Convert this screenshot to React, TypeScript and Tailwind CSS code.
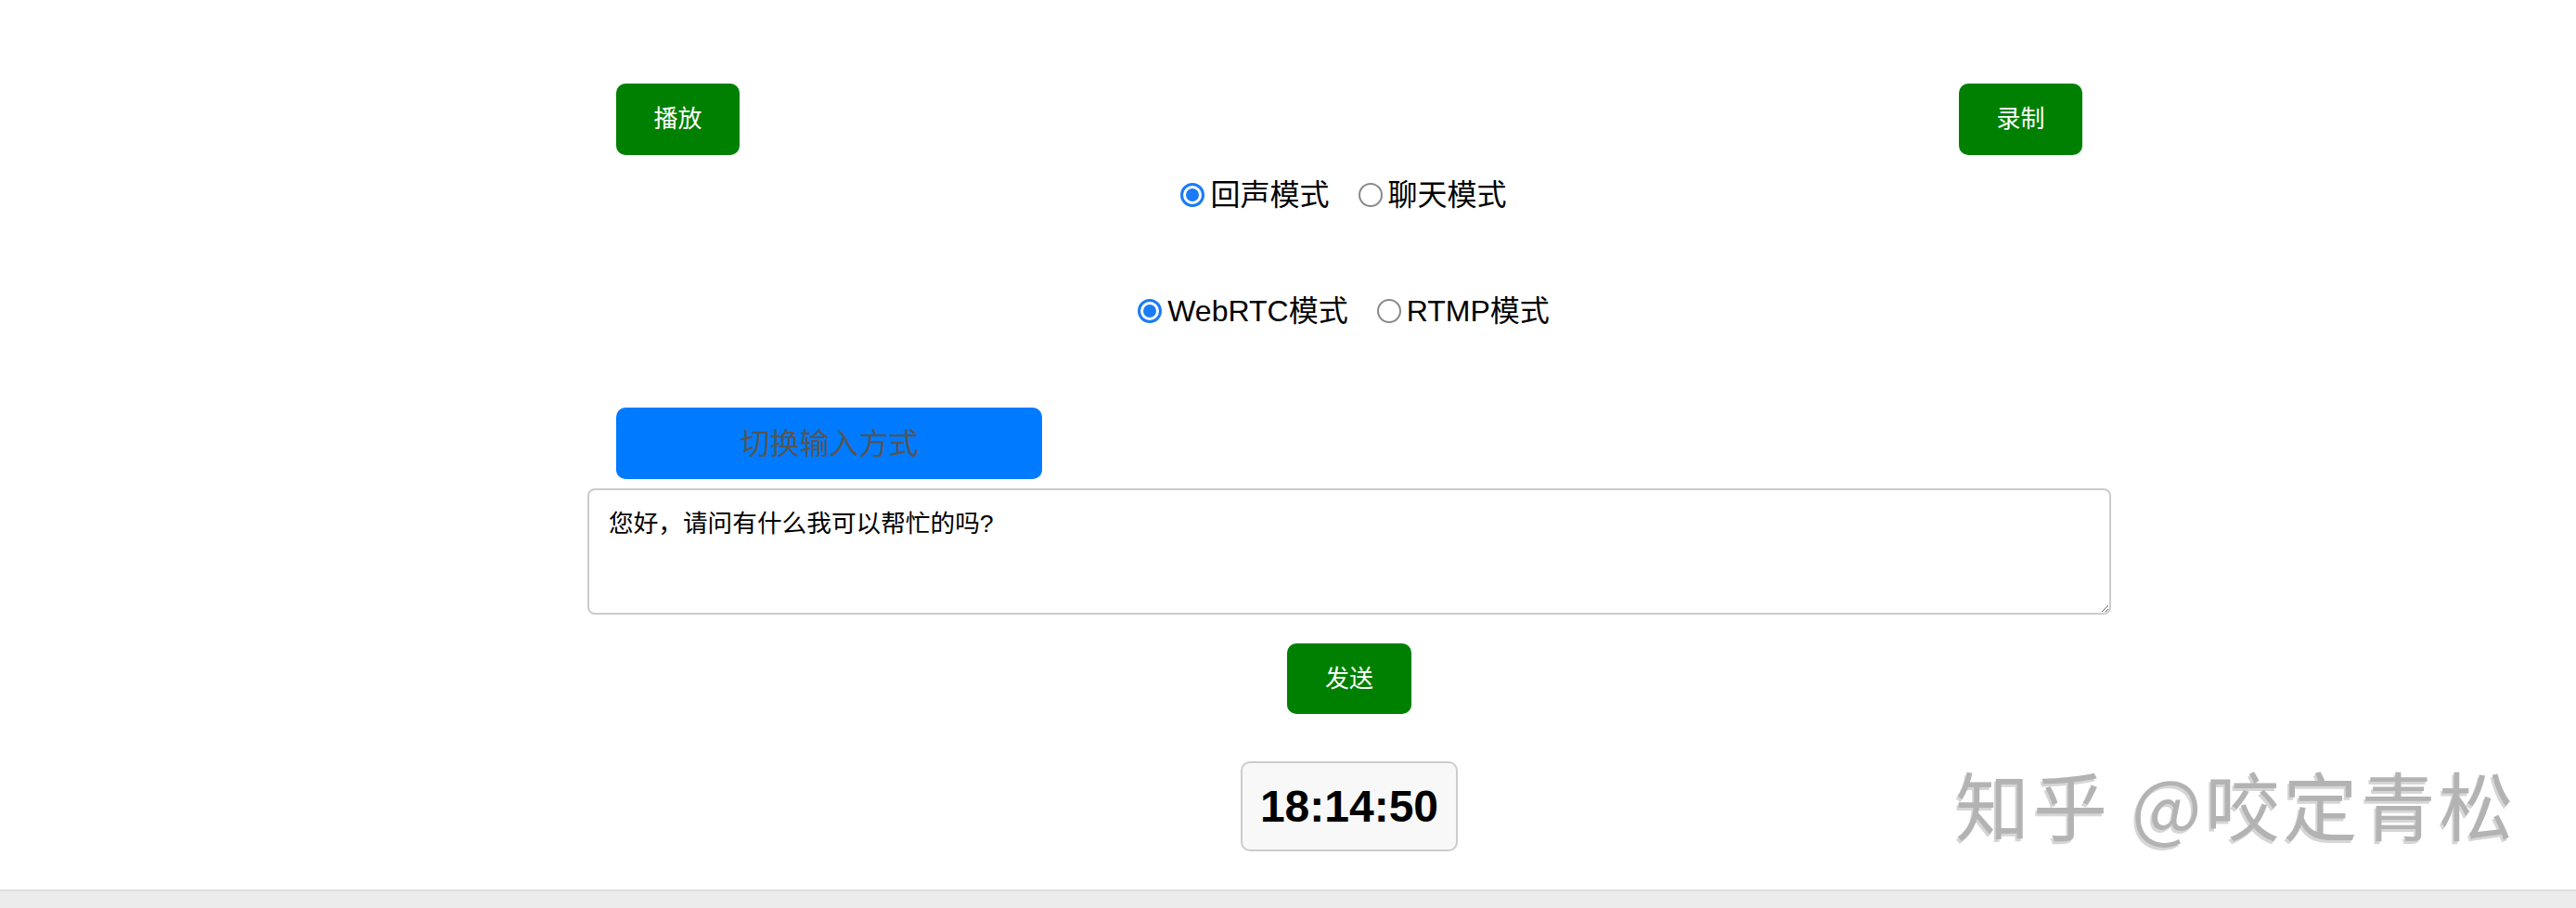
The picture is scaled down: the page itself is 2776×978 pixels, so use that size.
import { useState } from "react";

function Radio({ checked }: { checked: boolean }) {
  return checked ? (
    <span className="flex h-[26px] w-[26px] shrink-0 items-center justify-center rounded-full border-[3px] border-[#1a7cf5] bg-white">
      <span className="h-[14px] w-[14px] rounded-full bg-[#1a7cf5]" />
    </span>
  ) : (
    <span className="h-[26px] w-[26px] shrink-0 rounded-full border-2 border-[#8a8a8a] bg-white" />
  );
}

function RadioGroup({
  options,
  value,
  onChange,
}: {
  options: string[];
  value: string;
  onChange: (v: string) => void;
}) {
  return (
    <div className="flex h-[40px] items-center justify-center pr-[12px] text-[32px] text-black">
      {options.map((opt, i) => (
        <label
          key={opt}
          onClick={() => onChange(opt)}
          className={`flex cursor-pointer items-center ${i > 0 ? "ml-[31px]" : ""}`}
        >
          <Radio checked={value === opt} />
          <span className="ml-[6px] leading-none">{opt}</span>
        </label>
      ))}
    </div>
  );
}

export default function App() {
  const [mode, setMode] = useState("回声模式");
  const [transport, setTransport] = useState("WebRTC模式");
  const [text, setText] = useState("您好，请问有什么我可以帮忙的吗?");

  return (
    <div className="relative flex min-h-[978px] flex-col bg-white font-['Liberation_Sans','Noto_Sans_CJK_SC',sans-serif]">
      <div className="flex-1">
        <div className="ml-[633px] flex w-[1642px] flex-col">
          {/* top buttons */}
          <div className="flex justify-between px-[31px] pt-[90px]">
            <button className="h-[77px] w-[133px] rounded-[10px] bg-[#008000] text-[26px] text-white">
              播放
            </button>
            <button className="h-[77px] w-[133px] rounded-[10px] bg-[#008000] text-[26px] text-white">
              录制
            </button>
          </div>

          <div className="mt-[23px]">
            <RadioGroup
              options={["回声模式", "聊天模式"]}
              value={mode}
              onChange={setMode}
            />
          </div>

          <div className="mt-[85px]">
            <RadioGroup
              options={["WebRTC模式", "RTMP模式"]}
              value={transport}
              onChange={setTransport}
            />
          </div>

          <button className="ml-[31px] mt-[84px] h-[77px] w-[459px] rounded-[10px] bg-[#007bff] text-[32px] text-[#555555]">
            切换输入方式
          </button>

          <textarea
            value={text}
            onChange={(e) => setText(e.target.value)}
            className="mt-[10px] h-[136px] w-full rounded-[8px] border-2 border-[#cccccc] bg-white px-[21px] pt-[20px] text-[26.67px] leading-[1.2] text-black outline-none"
          />

          <button className="mt-[31px] h-[76px] w-[134px] self-center rounded-[10px] bg-[#008000] text-[26px] text-white">
            发送
          </button>

          <div className="mt-[51px] flex h-[97px] w-[234px] items-center justify-center self-center rounded-[10px] border-2 border-[#cccccc] bg-[#f8f8f8] text-[48px] font-bold text-black">
            18:14:50
          </div>
        </div>
      </div>

      {/* watermark */}
      <div className="pointer-events-none absolute left-[2107px] top-[824px] whitespace-nowrap font-['Noto_Sans_CJK_SC',sans-serif] text-[80px] leading-none tracking-[4px] text-[#b3b3b3] [text-shadow:-2px_3px_0_#d6d6d6]">
        知乎 @咬定青松
      </div>

      <div className="h-[20px] border-t-2 border-[#dedede] bg-[#ececec]" />
    </div>
  );
}
